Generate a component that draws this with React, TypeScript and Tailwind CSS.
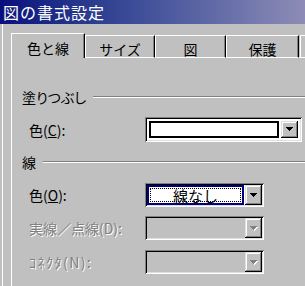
import type { ReactNode } from 'react';

const raised =
  'shadow-[inset_-1px_-1px_#000,inset_1px_1px_#dfdfdf,inset_-2px_-2px_#808080,inset_2px_2px_#fff]';
const sunken =
  'shadow-[inset_1px_1px_#808080,inset_-1px_-1px_#fff,inset_2px_2px_#000,inset_-2px_-2px_#dfdfdf]';

const Arrow = ({ disabled }: { disabled?: boolean }) => (
  <svg width="8" height="5" viewBox="0 0 8 5" shapeRendering="crispEdges">
    {disabled && (
      <g fill="#fff">
        <rect x="1" y="1" width="7" height="1" />
        <rect x="2" y="2" width="5" height="1" />
        <rect x="3" y="3" width="3" height="1" />
        <rect x="4" y="4" width="1" height="1" />
      </g>
    )}
    <g fill={disabled ? '#808080' : '#000'}>
      <rect x="0" y="0" width="7" height="1" />
      <rect x="1" y="1" width="5" height="1" />
      <rect x="2" y="2" width="3" height="1" />
      <rect x="3" y="3" width="1" height="1" />
    </g>
  </svg>
);

const DropButton = ({ disabled }: { disabled?: boolean }) => (
  <div className={`w-[17px] h-full flex items-center justify-center bg-[#c0c0c0] ${raised}`}>
    <Arrow disabled={disabled} />
  </div>
);

const Tab = ({ label, w, active }: { label: string; w: string; active?: boolean }) =>
  active ? (
    <div
      className={`${w} h-[25px] border-l border-t border-white shadow-[inset_-1px_0_#808080] border-r border-r-black flex justify-center pt-[4px] text-[14px]`}
    >
      {label}
    </div>
  ) : (
    <div
      className={`${w} h-[23px] border-l border-t border-b border-white border-r border-r-black shadow-[inset_-1px_0_#808080] flex justify-center pt-[3px] text-[14px]`}
    >
      {label}
    </div>
  );

const GroupHeader = ({ label, mt }: { label: string; mt: string }) => (
  <div className={`${mt} h-[18px] pl-[10px] flex items-center gap-[7px]`}>
    <span className="text-[14px] leading-[18px] [font-feature-settings:'palt']">{label}</span>
    <div className="flex-1 h-[2px] border-t border-[#808080] border-b border-b-white" />
  </div>
);

const Row = ({
  label,
  mt,
  h,
  w,
  disabled,
  children,
}: {
  label: ReactNode;
  mt: string;
  h: string;
  w: string;
  disabled?: boolean;
  children: ReactNode;
}) => (
  <div className={`${mt} pl-[17px] flex items-center`}>
    <div
      className={`w-[116px] text-[14px] leading-[16px] ${
        disabled ? 'text-[#808080] [text-shadow:1px_1px_0_#fff]' : 'text-black'
      }`}
    >
      {label}
    </div>
    <div className={`${w} ${h} p-[2px] ${sunken}`}>{children}</div>
  </div>
);

export default function App() {
  return (
    <div className="w-[305px] h-[286px] overflow-hidden bg-[#c0c0c0] text-black font-['Noto_Sans_CJK_JP',sans-serif]">
      {/* Title bar */}
      <div className="h-[24px] flex items-center pl-[3px] bg-gradient-to-r from-[#0c0c7c] to-[#8e8cb6] text-white text-[16px] tracking-[1px]">
        図の書式設定
      </div>

      <div className="h-[262px] ml-[2px] border-l border-white pl-[8px] pt-[9px] flex flex-col">
        {/* Tabs */}
        <div className="flex items-end h-[25px]">
          <Tab label="色と線" w="w-[74px]" active />
          <Tab label="サイズ" w="w-[70px]" />
          <Tab label="図" w="w-[71px]" />
          <Tab label="保護" w="w-[73px]" />
          <div className="w-[1px] h-[23px] border-b border-white" />
          <div className="flex-1 h-[23px] border-l border-t border-b border-white" />
        </div>

        {/* Panel */}
        <div className="flex-1 border-l border-white flex flex-col">
          <GroupHeader label="塗りつぶし" mt="mt-[30px]" />
          <Row
            mt="mt-[11px]"
            h="h-[25px]"
            w="w-[157px]"
            label={
              <>
                色(<u>C</u>):
              </>
            }
          >
            <div className="h-full bg-white flex gap-[2px] p-[2px]">
              <div className="flex-1 border-2 border-black bg-white" />
              <DropButton />
            </div>
          </Row>

          <GroupHeader label="線" mt="mt-[11px]" />
          <Row
            mt="mt-[12px]"
            h="h-[24px]"
            w="w-[119px]"
            label={
              <>
                色(<u>O</u>):
              </>
            }
          >
            <div className="h-full bg-white flex gap-[1px]">
              <div className="flex-1 border-2 border-[#000080] p-[1px]">
                <div className="h-full border border-dotted border-black flex items-center justify-center text-[15px] leading-none">
                  線なし
                </div>
              </div>
              <DropButton />
            </div>
          </Row>

          <Row mt="mt-[9px]" h="h-[24px]" w="w-[119px]" label="実線／点線(D):" disabled>
            <div className="h-full bg-[#c0c0c0] flex justify-end">
              <DropButton disabled />
            </div>
          </Row>

          <Row
            mt="mt-[10px]"
            h="h-[24px]"
            w="w-[119px]"
            label={<span className="tracking-[1.5px]">ｺﾈｸﾀ(N):</span>}
            disabled
          >
            <div className="h-full bg-[#c0c0c0] flex justify-end">
              <DropButton disabled />
            </div>
          </Row>
        </div>
      </div>
    </div>
  );
}
